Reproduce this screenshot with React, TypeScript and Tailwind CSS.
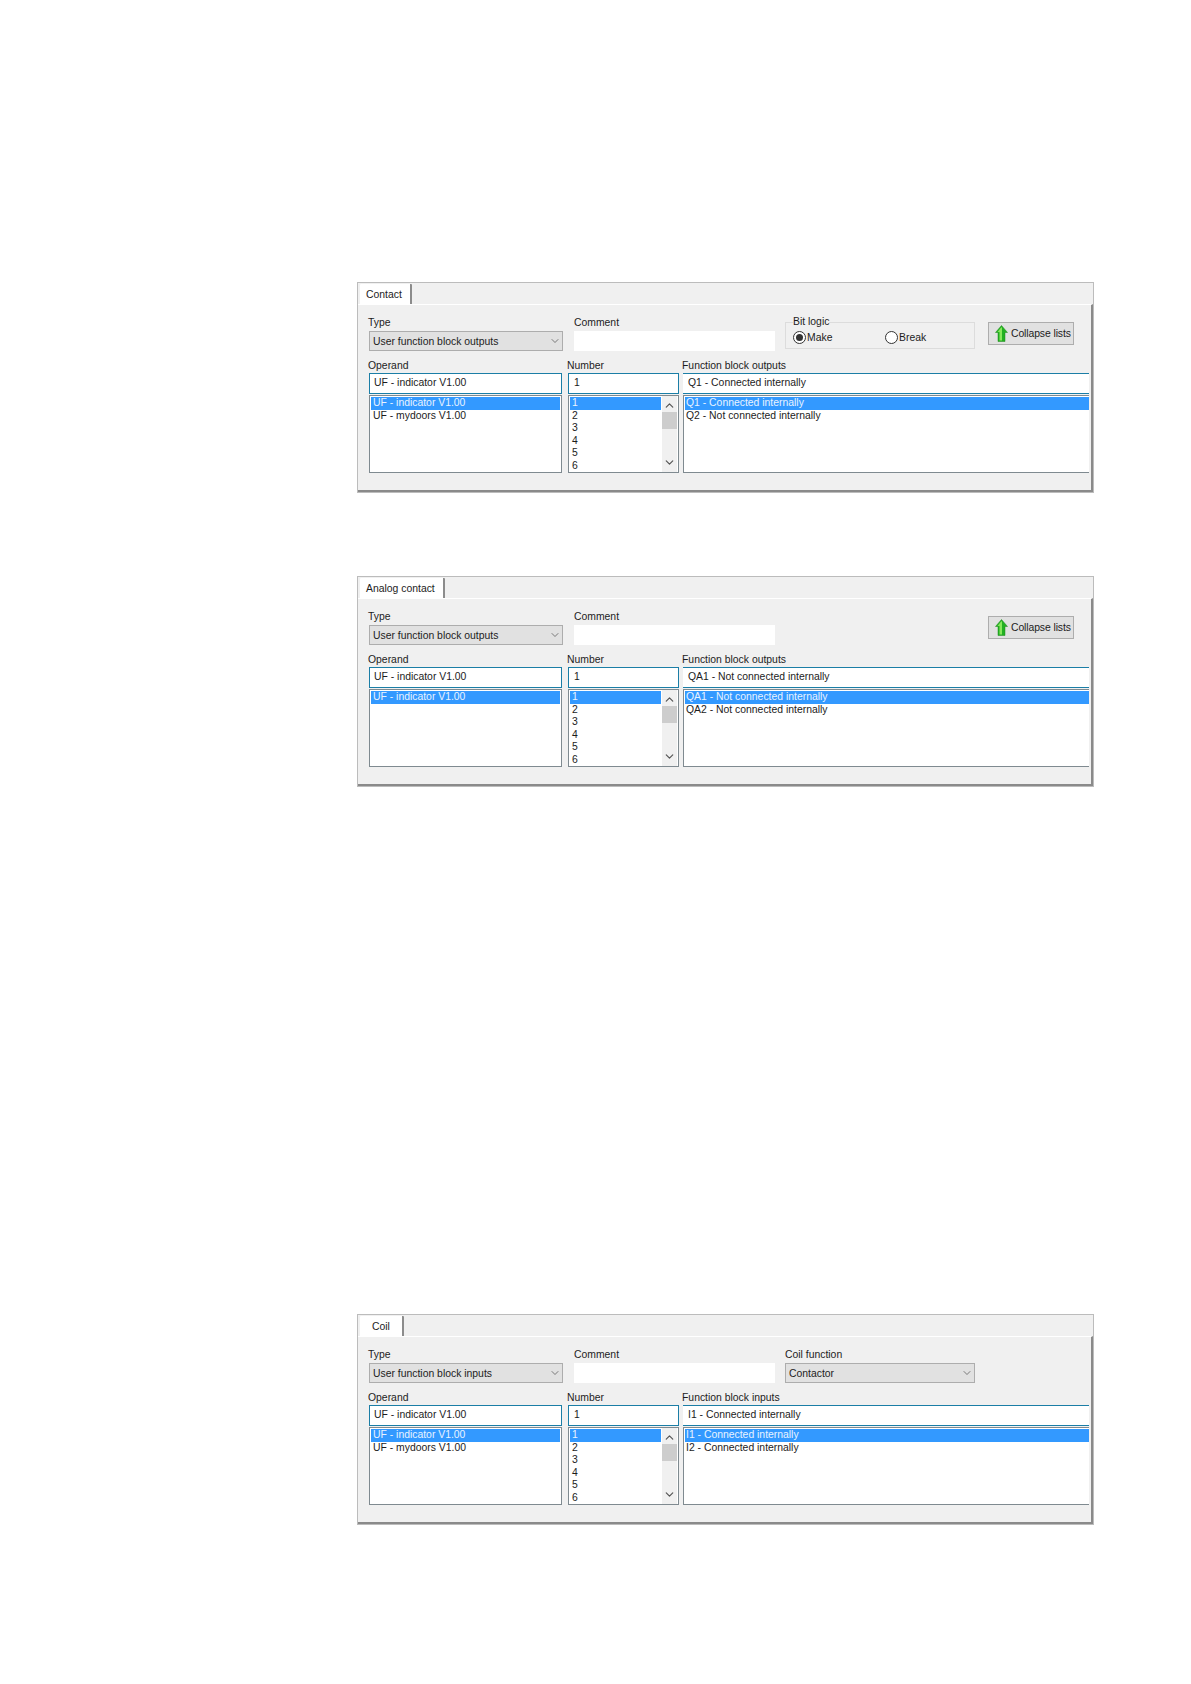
import React from "react";
import { ChevronDown, ChevronUp } from "lucide-react";

const font = "font-['Liberation_Sans',sans-serif] text-[10.4px] leading-[14px] text-[#1c1c1c]";

function Label({ children, flush = true }: { children: React.ReactNode; flush?: boolean }) {
  return <div className={`h-[14px] whitespace-nowrap leading-[16px] ${flush ? "-ml-px" : ""}`}>{children}</div>;
}

function Combo({ value, width }: { value: string; width: string }) {
  return (
    <div className={`${width} mt-[2px] flex h-[20px] items-center justify-between border border-[#adadad] bg-[#e1e1e1] pl-[3px] pr-[1px]`}>
      <span className="whitespace-nowrap pt-[1px]">{value}</span>
      <ChevronDown size={12} strokeWidth={1.2} className="text-[#333]" />
    </div>
  );
}

function Radio({ label, checked, width }: { label: string; checked?: boolean; width: string }) {
  return (
    <div className={`${width} flex items-center gap-[1px]`}>
      <span className="flex h-[13px] w-[13px] items-center justify-center rounded-full border border-[#333] bg-white">
        {checked && <span className="h-[7px] w-[7px] rounded-full bg-[#333]" />}
      </span>
      <span className="pt-[1px]">{label}</span>
    </div>
  );
}

function CollapseButton() {
  return (
    <button className="ml-[13px] mt-[7px] flex h-[23px] w-[86px] items-center gap-[3px] border border-[#adadad] bg-[#e1e1e1] pl-[6px] tracking-[-0.1px]">
      <svg width="13" height="17" viewBox="0 0 13 17" className="shrink-0">
        <path d="M6.5 0.5 L12.5 7.5 L10 7.5 L10 16.5 L3 16.5 L3 7.5 L0.5 7.5 Z" fill="#22b022" stroke="#1f8a1c" strokeWidth="0.5" />
        <path d="M6.5 2 L2.5 7 L4.5 7 L4.5 15.5 L7 15.5 L7 3 Z" fill="#86e85c" />
      </svg>
      <span className="whitespace-nowrap">Collapse lists</span>
    </button>
  );
}

function ListRows({ rows, textPad }: { rows: string[]; textPad: string }) {
  return (
    <>
      {rows.map((row, i) => (
        <div
          key={row}
          className={`h-[12.5px] whitespace-nowrap leading-[11px] ${textPad} ${i === 0 ? "bg-[#3399ff] text-[#e8f3ff]" : ""}`}
        >
          {row}
        </div>
      ))}
    </>
  );
}

function InputBox({ value, pad, bordered = true }: { value: string; pad: string; bordered?: boolean }) {
  return (
    <div
      className={`mt-[1px] flex h-[21px] items-center whitespace-nowrap border-[#1b7ea6] bg-white pb-[2px] ${pad} ${
        bordered ? "border" : "border-y border-l-0"
      }`}
    >
      {value}
    </div>
  );
}

interface PanelProps {
  tab: string;
  tabWidth: string;
  tabPad: string;
  type: string;
  listTitle: string;
  operands: string[];
  current: string;
  functions: string[];
  extra?: React.ReactNode;
}

function Panel({ tab, tabWidth, tabPad, type, listTitle, operands, current, functions, extra }: PanelProps) {
  return (
    <div className="flex h-[211px] w-[737px] flex-col border border-[#bcbcbc] bg-[#f0f0f0]">
      <div className="flex h-[21px] items-end pl-[2px]">
        <div className={`${tabWidth} ${tabPad} h-[20px] whitespace-nowrap rounded-t-[1px] border-r-2 border-[#8c8c8c] bg-white leading-[22px]`}>{tab}</div>
      </div>
      <div className="flex-1 border-r-2 border-b-2 border-t border-t-white border-r-[#8a8a8a] border-b-[#8a8a8a] pl-[11px] pt-[10px]">
        <div className="flex h-[36px] items-start">
          <div className="w-[194px]">
            <Label>Type</Label>
            <Combo value={type} width="w-[194px]" />
          </div>
          <div className="ml-[11px] w-[201px]">
            <Label flush={false}>Comment</Label>
            <div className="mt-[2px] h-[20px] bg-white" />
          </div>
          {extra}
        </div>
        <div className="mt-[7px] flex items-start">
          <div className="w-[193px]">
            <Label>Operand</Label>
            <InputBox value="UF - indicator V1.00" pad="pl-[4px]" />
            <div className="mt-[1px] h-[78px] border border-[#7f8a90] bg-white pl-[1px] pt-[1px] pr-[1px]">
              <ListRows rows={operands} textPad="pl-[2px]" />
            </div>
          </div>
          <div className="ml-[6px] w-[111px]">
            <Label>Number</Label>
            <InputBox value="1" pad="pl-[5px]" />
            <div className="relative mt-[1px] h-[78px] overflow-hidden border border-[#7f8a90] bg-white pl-[1px] pt-[1px]">
              <div className="w-[91px]">
                <ListRows rows={["1", "2", "3", "4", "5", "6"]} textPad="pl-[2px]" />
              </div>
              <div className="absolute bottom-0 right-[1px] top-0 flex w-[15px] flex-col items-center justify-between bg-[#f0f0f0] py-[3px]">
                <ChevronUp size={13} strokeWidth={2.2} className="text-[#555]" />
                <div className="absolute left-0 top-[16px] h-[17px] w-[15px] bg-[#cdcdcd]" />
                <ChevronDown size={13} strokeWidth={2.2} className="text-[#555]" />
              </div>
            </div>
          </div>
          <div className="ml-[4px] w-[406px]">
            <Label>{listTitle}</Label>
            <InputBox value={current} pad="pl-[5px]" bordered={false} />
            <div className="mt-[1px] h-[78px] border-y border-l border-[#7f8a90] bg-white pl-[1px] pt-[1px]">
              <ListRows rows={functions} textPad="pl-[1px]" />
            </div>
          </div>
        </div>
      </div>
    </div>
  );
}

export default function App() {
  return (
    <div className={`${font} h-[1684px] bg-white pl-[357px] pt-[282px]`}>
      <Panel
        tab="Contact"
        tabWidth="w-[52px]"
        tabPad="pl-[6px]"
        type="User function block outputs"
        listTitle="Function block outputs"
        operands={["UF - indicator V1.00", "UF - mydoors V1.00"]}
        current="Q1 - Connected internally"
        functions={["Q1 - Connected internally", "Q2 - Not connected internally"]}
        extra={
          <>
            <fieldset className="ml-[10px] h-[34px] w-[190px] border border-[#dcdcdc] pl-[7px]">
              <legend className="h-[14px] leading-[14px]">Bit logic</legend>
              <div className="mt-[1px] flex">
                <Radio label="Make" checked width="w-[92px]" />
                <Radio label="Break" width="w-[80px]" />
              </div>
            </fieldset>
            <CollapseButton />
          </>
        }
      />
      <div className="mt-[83px]">
        <Panel
          tab="Analog contact"
          tabWidth="w-[85px]"
          tabPad="pl-[6px]"
          type="User function block outputs"
          listTitle="Function block outputs"
          operands={["UF - indicator V1.00"]}
          current="QA1 - Not connected internally"
          functions={["QA1 - Not connected internally", "QA2 - Not connected internally"]}
          extra={
            <div className="ml-[200px]">
              <CollapseButton />
            </div>
          }
        />
      </div>
      <div className="mt-[527px]">
        <Panel
          tab="Coil"
          tabWidth="w-[44px]"
          tabPad="pl-[12px]"
          type="User function block inputs"
          listTitle="Function block inputs"
          operands={["UF - indicator V1.00", "UF - mydoors V1.00"]}
          current="I1 - Connected internally"
          functions={["I1 - Connected internally", "I2 - Connected internally"]}
          extra={
            <div className="ml-[10px] w-[190px]">
              <Label flush={false}>Coil function</Label>
              <Combo value="Contactor" width="w-[190px]" />
            </div>
          }
        />
      </div>
    </div>
  );
}
